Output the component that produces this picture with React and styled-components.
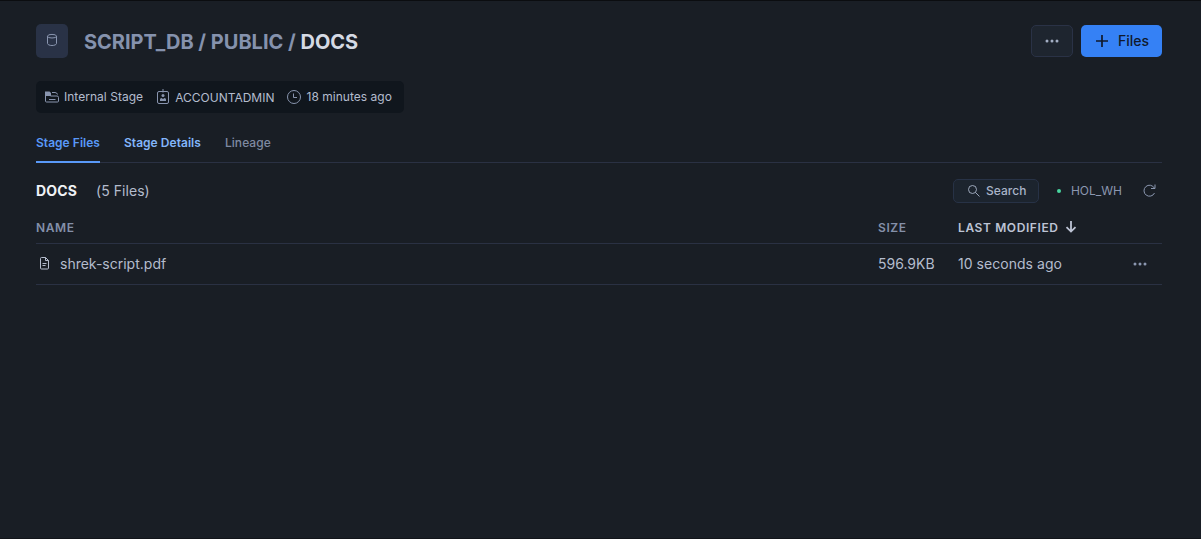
import React from "react";
import styled, { createGlobalStyle } from "styled-components";

const GlobalStyle = createGlobalStyle`
  *, *::before, *::after { box-sizing: border-box; }
  body {
    margin: 0;
    background: #191e25;
    font-family: Inter, "Liberation Sans", sans-serif;
    color: #bdc4d5;
  }
  button { font: inherit; cursor: pointer; }
  svg { display: block; flex: none; }
`;

const Page = styled.main`
  height: 100vh;
  min-height: 539px;
  padding: 23px 39px 0 36px;
  border-top: 1px solid #0b0d10;
  border-bottom: 1px solid #12151a;
  overflow: hidden;
`;

const Header = styled.header`
  display: flex;
  align-items: center;
  height: 34px;
`;

const ObjectBadge = styled.div`
  display: flex;
  justify-content: center;
  width: 32px;
  height: 34px;
  padding-top: 9px;
  border-radius: 5px;
  background: #293246;
  color: #8a96b0;
`;

const Title = styled.h1`
  margin: 2px auto 0 16px;
  font-size: 20px;
  line-height: 24px;
  font-weight: 700;
  letter-spacing: -0.01px;
  color: #8592ad;
  white-space: pre;
`;

const TitleCurrent = styled.span`
  color: #d5dae4;
`;

const MoreButton = styled.button`
  display: grid;
  place-items: center;
  width: 42px;
  height: 32px;
  margin-right: 8px;
  padding: 0;
  border: 1px solid #2a3246;
  border-radius: 5px;
  background: #1e252f;
  color: #a3aec4;
`;

const FilesButton = styled.button`
  display: flex;
  align-items: center;
  gap: 10px;
  width: 81px;
  height: 32px;
  padding: 0 0 0 15px;
  border: 0;
  border-radius: 5px;
  background: #3581f5;
  color: #10192b;
  font-size: 14px;
  line-height: 16px;
  font-weight: 500;
`;

const MetaBar = styled.div`
  display: flex;
  align-items: center;
  width: 368px;
  height: 32px;
  margin-top: 23px;
  padding-left: 9px;
  border-radius: 5px;
  background: #10161d;
`;

const MetaItem = styled.div`
  display: flex;
  align-items: center;
  gap: ${(p) => p.$gap || 5}px;
  margin-right: ${(p) => p.$after || 13}px;
  font-size: 12px;
  line-height: 16px;
  letter-spacing: ${(p) => p.$spacing || 0}px;
  white-space: nowrap;
  color: #b4bccd;
  svg { color: #8894ae; }
`;

const MetaLabel = styled.span`
  padding-top: 2px;
`;

const Tabs = styled.nav`
  display: flex;
  gap: 24px;
  height: 50px;
  border-bottom: 1px solid #2a3143;
`;

const Tab = styled.a`
  height: 50px;
  padding-top: 22px;
  border-bottom: 2px solid ${(p) => (p.$active ? "#5999f8" : "transparent")};
  font-size: 12px;
  line-height: 16px;
  font-weight: ${(p) => p.$weight || 600};
  letter-spacing: ${(p) => p.$spacing || 0}px;
  color: ${(p) => p.$color};
`;

const ListHeader = styled.div`
  display: flex;
  align-items: center;
  height: 56px;
`;

const ListTitle = styled.h2`
  margin: -1px 19px 0 0;
  font-size: 14px;
  line-height: 18px;
  font-weight: 700;
  letter-spacing: 0.15px;
  color: #f0f2f6;
`;

const FileCount = styled.span`
  margin: -1px auto 0 0;
  font-size: 14px;
  line-height: 18px;
  letter-spacing: 0.05px;
  color: #b4bccd;
`;

const SearchButton = styled.button`
  display: flex;
  align-items: center;
  gap: 6px;
  width: 86px;
  height: 24px;
  padding: 0 0 1px 13px;
  border: 1px solid #273246;
  border-radius: 5px;
  background: #1c242e;
  color: #a9b4c8;
  font-size: 12px;
  line-height: 14px;
  font-weight: 500;
  letter-spacing: 0.05px;
`;

const Warehouse = styled.div`
  display: flex;
  align-items: center;
  gap: 10px;
  margin: 0 21px 0 18px;
  font-size: 12px;
  line-height: 16px;
  color: #8b97b0;
`;

const StatusDot = styled.i`
  width: 4px;
  height: 4px;
  border-radius: 50%;
  background: #49d6a0;
`;

const RefreshButton = styled.button`
  padding: 0;
  margin: -1px 6px 0 0;
  border: 0;
  background: none;
  color: #8b97b0;
`;

const Row = styled.div`
  display: grid;
  grid-template-columns: 842px 80px 1fr auto;
  align-items: ${(p) => (p.$head ? "start" : "center")};
  height: ${(p) => p.$height}px;
  border-bottom: 1px solid #2a3143;
`;

const HeadCell = styled.div`
  display: flex;
  align-items: center;
  gap: 6px;
  font-size: 12px;
  line-height: 17px;
  font-weight: 600;
  letter-spacing: 0.6px;
  color: ${(p) => (p.$sorted ? "#bdc4d5" : "#8490a9")};
  svg { margin-bottom: 2px; }
`;

const Cell = styled.div`
  display: flex;
  align-items: center;
  gap: ${(p) => (p.$inset ? 11 : 0)}px;
  padding-left: ${(p) => p.$inset || 0}px;
  font-size: 14px;
  line-height: 20px;
  letter-spacing: ${(p) => p.$spacing || 0}px;
  color: #b4bccd;
  svg { margin-bottom: 2px; }
`;

const RowMenu = styled.button`
  margin-right: 15px;
  padding: 0;
  border: 0;
  background: none;
  color: #8b97b0;
`;

const Dots = () => (
  <svg width="14" height="4" viewBox="0 0 14 4" fill="currentColor">
    <circle cx="2" cy="2" r="1.5" />
    <circle cx="7" cy="2" r="1.5" />
    <circle cx="12" cy="2" r="1.5" />
  </svg>
);

const Stroke = ({ w = 14, h = 14, sw = 1, children }) => (
  <svg width={w} height={h} viewBox={`0 0 ${w} ${h}`} fill="none" stroke="currentColor" strokeWidth={sw}>
    {children}
  </svg>
);

const DatabaseIcon = () => (
  <Stroke w={12} h={14}>
    <ellipse cx="6" cy="3.2" rx="4.5" ry="1.8" />
    <path d="M1.5 3.200v7.300c0 1 2 2 4.500 2s4.500-1 4.500-2V3.200" />
  </Stroke>
);

const PlusIcon = () => (
  <Stroke w={12} h={12} sw={1.7}>
    <path d="M6 0v12M0 6h12" />
  </Stroke>
);

const StageIcon = () => (
  <Stroke>
    <path d="M0 1.500h4.500l1.500 1.500v3H0z" fill="currentColor" stroke="none" />
    <path d="M.5 5.500v5.500q0 1 1 1h11q1 0 1-1V7.500q0-1.500-1.500-1.500H5.500M7 2.500h3q2 0 2.500 2M4 9.500h6.500" />
  </Stroke>
);

const RoleIcon = () => (
  <Stroke w={12} h={16}>
    <rect x=".5" y="2.500" width="11" height="12" rx="1.500" />
    <path d="M6 0v3.500" />
    <circle cx="6" cy="6.500" r="1.500" fill="currentColor" stroke="none" />
    <path d="M3 12v-1.500q0-1.500 1.500-1.500L6 10l1.500-1Q9 9 9 10.500V12z" fill="currentColor" stroke="none" />
  </Stroke>
);

const ClockIcon = () => (
  <Stroke>
    <circle cx="7" cy="7" r="6.500" />
    <path d="M6.500 3.500v4h3.500" />
  </Stroke>
);

const SearchIcon = () => (
  <Stroke w={13} h={13} sw={0.9}>
    <circle cx="5.500" cy="5.500" r="4" />
    <path d="M8.500 8.500l4 4" />
  </Stroke>
);

const RefreshIcon = () => (
  <Stroke w={13} h={13}>
    <path d="M11.300 4A5.500 5.500 0 1 0 11.500 9M12 .5v4H8" />
  </Stroke>
);

const ArrowDownIcon = () => (
  <Stroke w={12} h={12} sw={1.8}>
    <path d="M6 0v10.500M1.500 6.200L6 10.600l4.500-4.400" />
  </Stroke>
);

const FileIcon = () => (
  <Stroke w={9} h={13}>
    <path d="M1.500.5H5.500L8.500 3.500V11q0 1-1 1h-6q-1 0-1-1V1.500q0-1 1-1zM5.500.5v3h3M2.500 6.500h4M2.500 8.500h3" />
  </Stroke>
);

export default function App() {
  return (
    <>
      <GlobalStyle />
      <Page>
        <Header>
          <ObjectBadge><DatabaseIcon /></ObjectBadge>
          <Title>SCRIPT_DB / PUBLIC / <TitleCurrent>DOCS</TitleCurrent></Title>
          <MoreButton aria-label="More"><Dots /></MoreButton>
          <FilesButton><PlusIcon />Files</FilesButton>
        </Header>
        <MetaBar>
          <MetaItem $spacing={0.03} $after={14}><StageIcon />Internal Stage</MetaItem>
          <MetaItem $gap={6}><RoleIcon /><MetaLabel>ACCOUNTADMIN</MetaLabel></MetaItem>
          <MetaItem $spacing={0.03}><ClockIcon />18 minutes ago</MetaItem>
        </MetaBar>
        <Tabs>
          <Tab $active $color="#5999f8" $spacing={0.03}>Stage Files</Tab>
          <Tab $color="#83b5fa" $spacing={0.04}>Stage Details</Tab>
          <Tab $color="#7f8aa1" $weight={500} $spacing={0.06}>Lineage</Tab>
        </Tabs>
        <ListHeader>
          <ListTitle>DOCS</ListTitle>
          <FileCount>(5 Files)</FileCount>
          <SearchButton><SearchIcon />Search</SearchButton>
          <Warehouse><StatusDot />HOL_WH</Warehouse>
          <RefreshButton aria-label="Refresh"><RefreshIcon /></RefreshButton>
        </ListHeader>
        <Row $head $height={25}>
          <HeadCell>NAME</HeadCell>
          <HeadCell>SIZE</HeadCell>
          <HeadCell $sorted>LAST MODIFIED<ArrowDownIcon /></HeadCell>
        </Row>
        <Row $height={41}>
          <Cell $inset={4}><FileIcon />shrek-script.pdf</Cell>
          <Cell>596.9KB</Cell>
          <Cell $spacing={0.04}>10 seconds ago</Cell>
          <RowMenu aria-label="File actions"><Dots /></RowMenu>
        </Row>
      </Page>
    </>
  );
}
